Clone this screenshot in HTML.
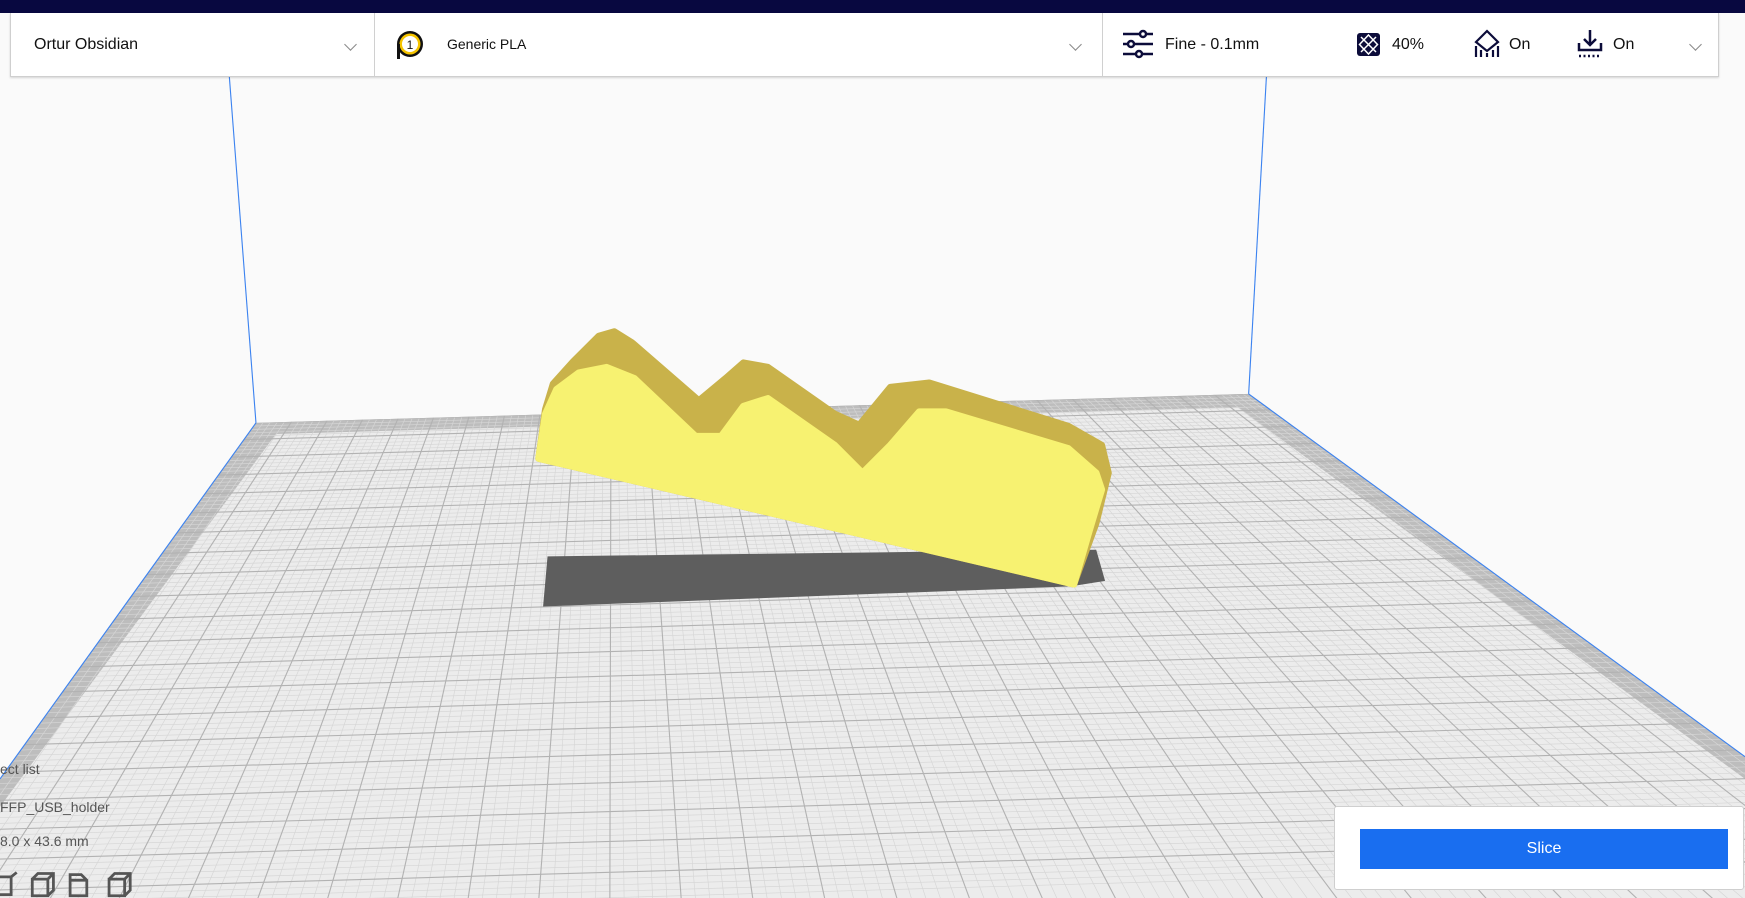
<!DOCTYPE html>
<html><head><meta charset="utf-8"><style>
html,body{margin:0;width:1745px;height:898px;overflow:hidden}
body{background:#fafafa;font-family:"Liberation Sans","DejaVu Sans",sans-serif;position:relative}
#nav{position:absolute;left:0;top:0;width:1745px;height:13px;background:#080840}
#bar{position:absolute;left:10px;top:13px;width:1707px;height:63px;background:#fff;border:1px solid #cfcfcf;border-top:none;box-shadow:0 1px 2px rgba(0,0,0,.15)}
.t{position:absolute;top:0;line-height:63px;font-size:16px;color:#111}
.div{position:absolute;top:0;width:1px;height:63px;background:#d0d0d0}
.chev{position:absolute;top:27px;width:8px;height:8px;border-right:1.5px solid #888;border-bottom:1.5px solid #888;transform:rotate(45deg)}
svg{position:absolute;left:0;top:0}
#panel{position:absolute;left:1334px;top:806px;width:410px;height:84px;background:#fff;border:1px solid #cfcfcf;border-radius:3px;box-sizing:border-box}
#slice{position:absolute;left:1360px;top:829px;width:368px;height:40px;background:#196ef0;color:#fff;font-size:16px;text-align:center;line-height:40px}
.lt{position:absolute;left:0;font-size:14px;color:#555}
</style></head><body>
<svg width="1745" height="898" viewBox="0 0 1568 807" preserveAspectRatio="none">
<defs><clipPath id="pl"><polygon points="230,380 1122,354 1568,680 1568,807 0,807 0,700"/></clipPath></defs>
<polygon points="230,380 1122,354 1568,680 1568,807 0,807 0,700" fill="#bdbdbd"/>
<polygon points="248,390 1112,366 1568,700 1568,807 0,807 0,725" fill="#ececec"/>
<g id="minor" clip-path="url(#pl)" stroke="#d6d6d6" stroke-width="0.6"></g>
<g id="grid" clip-path="url(#pl)" stroke="#b2b2b2" stroke-width="1"></g>
<line x1="206" y1="68" x2="230" y2="380" stroke="#3b82f0" stroke-width="1"/>
<line x1="1138" y1="68" x2="1122" y2="354" stroke="#3b82f0" stroke-width="1"/>
<line x1="230" y1="380" x2="0" y2="700" stroke="#3b82f0" stroke-width="1"/>
<line x1="1122" y1="354" x2="1568" y2="680" stroke="#3b82f0" stroke-width="1"/>
<polygon points="492,500 985,494 993,522 962,527 488,545" fill="#5e5e5e"/>
<path d="M484,412 L490,368 497,345 515,325 538,302 552,298 568,308 628,360 652,340 668,326 690,330 750,372 772,382 800,348 835,344 960,383 990,400 996,425 985,470 965,525 Z" fill="#c9b24a" stroke="#c9b24a" stroke-width="6" stroke-linejoin="round"/>
<path d="M484,412 L490,372 500,350 520,335 545,330 570,340 625,392 648,392 668,365 690,358 750,400 775,425 800,400 826,370 850,370 960,403 985,425 990,440 978,480 965,525 Z" fill="#f7f271" stroke="#f7f271" stroke-width="6" stroke-linejoin="round"/>
<g fill="none" stroke="#555" stroke-width="2.5">
<path d="M-4,788 h14 v16 h-14z M10,788 l5,-4"/>
<path d="M29,790 h14 v15 h-14z M29,790 l5,-5 h14 v15 l-5,5 M43,790 l5,-5"/>
<path d="M63,786 h10 l5,5 v14 h-15z M63,791 h15"/>
<path d="M98,790 h14 v15 h-14z M98,790 l5,-5 h14 v15 l-5,5 M112,790 l5,-5"/>
</g>
</svg>
<div id="nav"></div>
<div id="bar">
<div class="t" style="left:23px">Ortur Obsidian</div>
<div class="chev" style="left:335px"></div>
<div class="div" style="left:363px"></div>
<svg style="left:382px;top:15px" width="34" height="34" viewBox="0 0 34 34"><circle cx="17" cy="16" r="13" fill="#111"/><circle cx="17" cy="16" r="10.5" fill="#f5c400"/><circle cx="17" cy="16" r="8" fill="#fff"/><rect x="4" y="16" width="3" height="15" fill="#111"/><text x="17" y="21" font-size="12" text-anchor="middle" fill="#111" font-family="Liberation Sans">1</text></svg>
<div class="t" style="left:436px;font-size:14px">Generic PLA</div>
<div class="chev" style="left:1060px"></div>
<div class="div" style="left:1091px"></div>
<svg style="left:1110px;top:16px" width="34" height="30" viewBox="0 0 34 30" stroke="#0c0c3a" stroke-width="2.5" fill="none"><path d="M2,5h30M2,15h30M2,25h30"/><circle cx="22" cy="5" r="3" fill="#fff"/><circle cx="10" cy="15" r="3" fill="#fff"/><circle cx="18" cy="25" r="3" fill="#fff"/></svg>
<div class="t" style="left:1154px">Fine - 0.1mm</div>
<svg style="left:1345px;top:19px" width="25" height="25" viewBox="0 0 25 25"><rect x="1" y="1" width="23" height="23" rx="3" fill="#0c0c3a"/><path d="M5,5l15,15M20,5L5,20M12.5,3l9,9.5-9,9.5-9-9.5z" stroke="#fff" stroke-width="1.5" fill="none"/></svg>
<div class="t" style="left:1381px">40%</div>
<svg style="left:1462px;top:16px" width="28" height="30" viewBox="0 0 28 30" stroke="#0c0c3a" stroke-width="2.2" fill="none"><path d="M14,2l11,11-11,9-11-9z"/><path d="M3,17v11M8,21v7M14,24v4M20,21v7M25,17v11"/></svg>
<div class="t" style="left:1498px">On</div>
<svg style="left:1565px;top:15px" width="28" height="30" viewBox="0 0 28 30" stroke="#0c0c3a" stroke-width="2.5" fill="none"><path d="M14,2v15M8,11l6,6 6-6M3,15v7h22v-7"/><path d="M3,28h22" stroke-dasharray="2 2.5"/></svg>
<div class="t" style="left:1602px">On</div>
<div class="chev" style="left:1680px"></div>
</div>
<div class="lt" style="top:761px">ect list</div>
<div class="lt" style="top:799px">FFP_USB_holder</div>
<div class="lt" style="top:833px">8.0 x 43.6 mm</div>
<div id="panel"></div>
<div id="slice">Slice</div>
<script>
var vx=550,vy=-64,s='',m='';
for(var i=-200;i<=350;i++){var bx=230+i*6.38,by=380-i*0.186;var t=(900-vy)/(by-vy);var ex=vx+(bx-vx)*t;var l='<line x1="'+vx+'" y1="'+vy+'" x2="'+ex+'" y2="900"/>';if(i%5==0)s+=l;else m+=l;}
var y=380,k=0,dy=-0.029*1568;while(y<820){var l='<line x1="0" y1="'+(y+6.6)+'" x2="1568" y2="'+(y+6.6+dy)+'"/>';if(k%5==0)s+=l;else m+=l;y+=0.0066*(y-vy);k++;}
document.getElementById('grid').innerHTML=s;document.getElementById('minor').innerHTML=m;
</script>
</body></html>
